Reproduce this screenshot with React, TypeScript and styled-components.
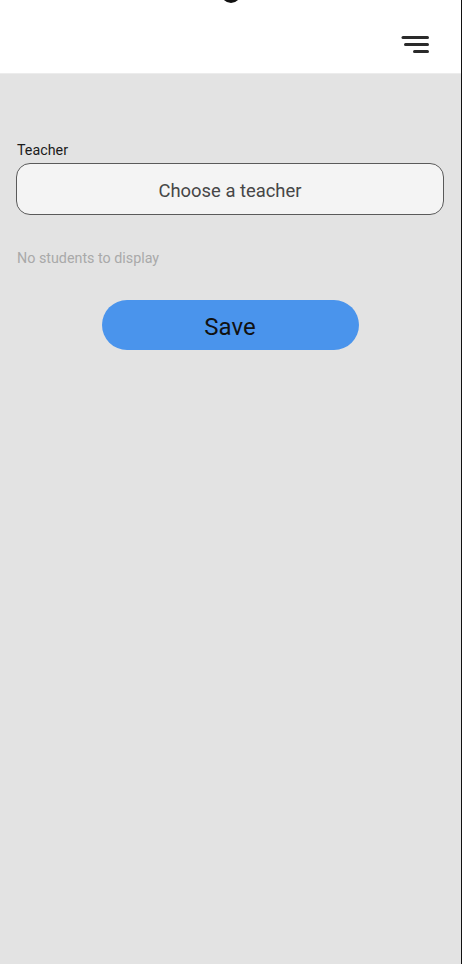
import React from "react"
import styled, { createGlobalStyle } from "styled-components"

const GlobalStyle = createGlobalStyle`
  html, body {
    margin: 0;
    padding: 0;
    background: #e3e3e3;
  }
  body {
    font-family: Roboto, "Noto Sans", Arial, sans-serif;
  }
  * {
    box-sizing: border-box;
  }
`

const Screen = styled.div`
  min-height: 100vh;
  display: flex;
  flex-direction: column;
  background: #e3e3e3;
  border-right: 1px solid #111;
`

const Header = styled.header`
  position: relative;
  height: 74px;
  background: #fff;
  border-bottom: 1px solid #ececec;
  display: flex;
  align-items: flex-start;
  justify-content: flex-end;
  padding: 36px 32px 0 0;
`

const LogoTip = styled.div`
  position: absolute;
  left: 221px;
  top: -17px;
  width: 20px;
  height: 20px;
  border-radius: 50%;
  background: #111;
`

const MenuButton = styled.button`
  border: none;
  background: transparent;
  padding: 0;
  cursor: pointer;
  display: flex;
`

const Main = styled.main`
  display: flex;
  flex-direction: column;
  padding: 68px 17px 0 16px;
`

const Label = styled.label`
  font-size: 14.3px;
  line-height: 17px;
  color: #1b1b1b;
  padding-left: 1px;
  margin-bottom: 4px;
`

const Select = styled.button`
  height: 52px;
  width: 100%;
  padding: 3px 0 0;
  border: 1px solid #5a5a5a;
  border-radius: 14px;
  background: #f4f4f4;
  font-family: Roboto, "Noto Sans", Arial, sans-serif;
  font-size: 18.4px;
  color: #464646;
  cursor: pointer;
`

const EmptyNote = styled.p`
  margin: 35px 0 0 1px;
  font-size: 14.3px;
  line-height: 17px;
  color: #a9a9a9;
`

const SaveButton = styled.button`
  align-self: center;
  margin-top: 33px;
  width: 257px;
  height: 50px;
  padding: 3px 0 0;
  border: none;
  border-radius: 25px;
  background: #4a94ec;
  font-family: Roboto, "Noto Sans", Arial, sans-serif;
  font-size: 24px;
  color: #111;
  cursor: pointer;
`

const MenuIcon = () => (
  <svg width="28" height="18" viewBox="0 0 28 18">
    <g stroke="#2a2a2a" strokeWidth="3" strokeLinecap="round">
      <line x1="2" y1="1.5" x2="26.5" y2="1.5" />
      <line x1="4.5" y1="8.5" x2="26.5" y2="8.5" />
      <line x1="13.5" y1="15.5" x2="26.5" y2="15.5" />
    </g>
  </svg>
)

export default function App() {
  return (
    <>
      <GlobalStyle />
      <Screen>
        <Header>
          <LogoTip />
          <MenuButton aria-label="Menu">
            <MenuIcon />
          </MenuButton>
        </Header>
        <Main>
          <Label htmlFor="teacher">Teacher</Label>
          <Select id="teacher">Choose a teacher</Select>
          <EmptyNote>No students to display</EmptyNote>
          <SaveButton>Save</SaveButton>
        </Main>
      </Screen>
    </>
  )
}
